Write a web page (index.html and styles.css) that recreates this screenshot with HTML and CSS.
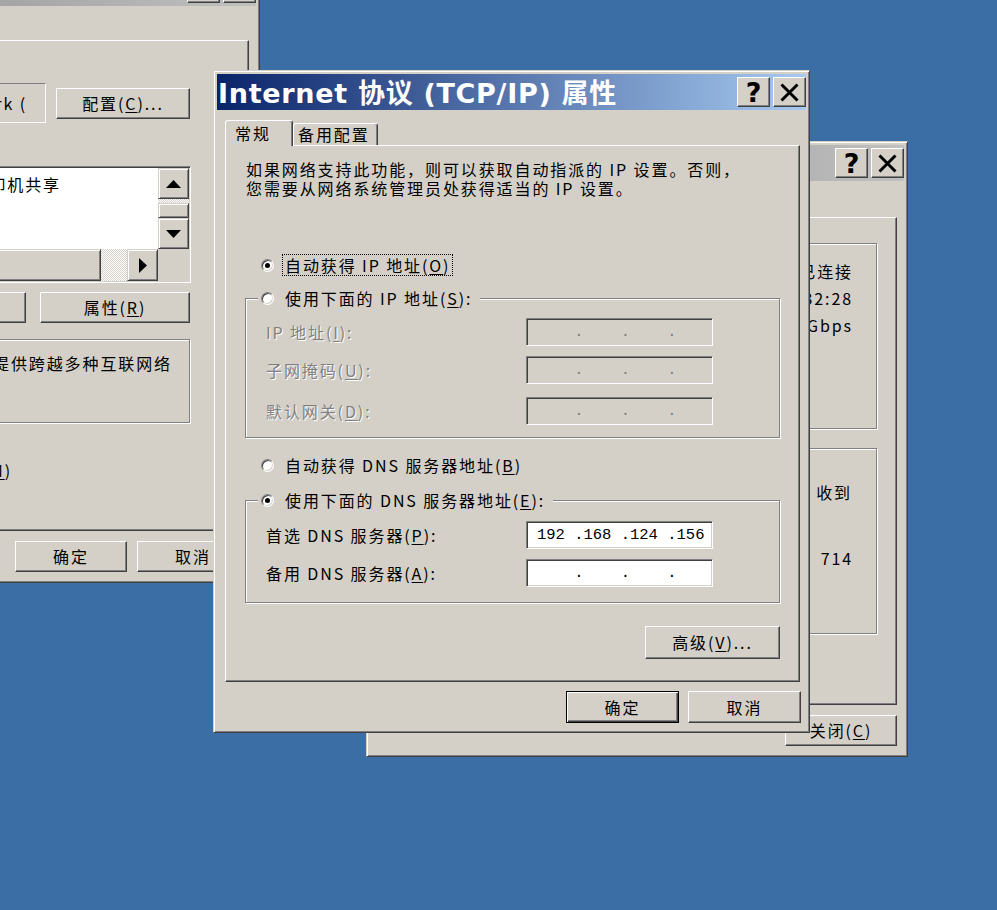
FILE: index.html
```html
<!DOCTYPE html>
<html lang="zh-CN">
<head>
<meta charset="utf-8">
<title>Internet 协议 (TCP/IP) 属性</title>
<link rel="stylesheet" href="styles.css">
</head>
<body>
<div class="desktop">

  <section class="win w1">
    <div class="titlebar inactive">
      <span class="ttext">本地连接 属性</span>
      <span class="tbtns">
        <span class="tbtn help">?</span>
        <span class="tbtn"><svg class="xicon" viewBox="0 0 19 19"><path d="M1.5 1.5L17.5 17.5M17.5 1.5L1.5 17.5"/></svg></span>
      </span>
    </div>
    <div class="page p1">
      <div class="p1-conn">
        <div class="adapter"><span class="nowrap">Intel(R) PRO/1000 MT Network (</span></div>
        <button class="btn b-config">配置(<u>C</u>)...</button>
      </div>
      <div class="listbox">
        <div class="list-area">
          <div class="list-item">Microsoft 网络的文件和打印机共享</div>
        </div>
        <div class="vscroll">
          <span class="sbtn"><svg class="arr-v" viewBox="0 0 15 8"><path d="M0 8H15L7.5 0Z"/></svg></span>
          <span class="track vtrack"></span>
          <span class="sthumb vthumb"></span>
          <span class="sbtn"><svg class="arr-v" viewBox="0 0 15 8"><path d="M0 0H15L7.5 8Z"/></svg></span>
        </div>
        <div class="hscroll">
          <span class="sthumb hthumb"></span>
          <span class="track htrack"></span>
          <span class="sbtn"><svg class="arr-h" viewBox="0 0 8 15"><path d="M0 0L8 7.5L0 15Z"/></svg></span>
        </div>
        <div class="corner"></div>
      </div>
      <div class="p1-btns">
        <button class="btn b-uninst">卸载(<u>U</u>)</button>
        <button class="btn b-prop">属性(<u>R</u>)</button>
      </div>
      <div class="group p1-desc">
        <span class="nowrap">传输控制协议/Internet 协议。该协议是默认的广域网协议，它提供跨越多种互联网络</span>
      </div>
      <div class="p1-check"><span class="nowrap">此连接被限制或无连接时通知我(<u>M</u>)</span></div>
    </div>
    <div class="dlg-btns w1-btns">
      <button class="btn">确定</button>
      <button class="btn">取消</button>
    </div>
  </section>

  <section class="win w3">
    <div class="titlebar inactive">
      <span class="ttext">本地连接 状态</span>
      <span class="tbtns">
        <span class="tbtn help">?</span>
        <span class="tbtn"><svg class="xicon" viewBox="0 0 19 19"><path d="M1.5 1.5L17.5 17.5M17.5 1.5L1.5 17.5"/></svg></span>
      </span>
    </div>
    <div class="page p3">
      <div class="group g3a">
        <div class="srow"><span>状态:</span><span>已连接</span></div>
        <div class="srow"><span>持续时间:</span><span>00:32:28</span></div>
        <div class="srow"><span>速度:</span><span>1.0 Gbps</span></div>
      </div>
      <div class="group g3b">
        <div class="srow act-head"><span>发送</span><span>收到</span></div>
        <div class="srow act-pk"><span>数据包:</span><span>753</span><span>714</span></div>
      </div>
    </div>
    <div class="w3-foot"><button class="btn b-close">关闭(<u>C</u>)</button></div>
  </section>

  <section class="win w2">
    <div class="titlebar active">
      <span class="ttext">Internet 协议 (TCP/IP) 属性</span>
      <span class="tbtns">
        <span class="tbtn help">?</span>
        <span class="tbtn"><svg class="xicon" viewBox="0 0 19 19"><path d="M1.5 1.5L17.5 17.5M17.5 1.5L1.5 17.5"/></svg></span>
      </span>
    </div>
    <div class="tabs">
      <span class="tab sel">常规</span>
      <span class="tab">备用配置</span>
    </div>
    <div class="page p2">
      <p class="desc">如果网络支持此功能，则可以获取自动指派的 IP 设置。否则，<br>您需要从网络系统管理员处获得适当的 IP 设置。</p>
      <div class="radio-row r-auto-ip"><span class="radio on"></span><span class="focus">自动获得 IP 地址(<u>O</u>)</span></div>
      <div class="group g-ip">
        <div class="legend"><span class="radio"></span><span>使用下面的 IP 地址(<u>S</u>):</span></div>
        <div class="frow"><span class="lbl dis">IP 地址(<u>I</u>):</span><span class="ipbox off">    .    .    .</span></div>
        <div class="frow"><span class="lbl dis">子网掩码(<u>U</u>):</span><span class="ipbox off">    .    .    .</span></div>
        <div class="frow fr-gw"><span class="lbl dis">默认网关(<u>D</u>):</span><span class="ipbox off">    .    .    .</span></div>
      </div>
      <div class="radio-row r-auto-dns"><span class="radio"></span><span>自动获得 DNS 服务器地址(<u>B</u>)</span></div>
      <div class="group g-dns">
        <div class="legend"><span class="radio on"></span><span>使用下面的 DNS 服务器地址(<u>E</u>):</span></div>
        <div class="frow fr-dns1"><span class="lbl">首选 DNS 服务器(<u>P</u>):</span><span class="ipbox">192 .168 .124 .156</span></div>
        <div class="frow"><span class="lbl">备用 DNS 服务器(<u>A</u>):</span><span class="ipbox">    .    .    .</span></div>
      </div>
      <button class="btn adv">高级(<u>V</u>)...</button>
    </div>
    <div class="dlg-btns w2-btns">
      <button class="btn default">确定</button>
      <button class="btn">取消</button>
    </div>
  </section>

</div>
</body>
</html>
```

FILE: styles.css
```css
* { box-sizing: border-box; }
html, body { margin: 0; padding: 0; }
body {
  width: 997px; height: 910px; overflow: hidden;
  background: #3a6ea5;
  font-family: "Noto Sans CJK SC", "Noto Sans", sans-serif;
  font-size: 16px; letter-spacing: 1.9px; line-height: 19px; color: #000;
}
.desktop { position: relative; width: 997px; height: 910px; }
.nowrap { white-space: nowrap; }
u { text-decoration: underline; text-underline-offset: 2px; }

/* windows */
.win {
  position: absolute; display: flex; flex-direction: column;
  background: #d4d0c8; padding: 3px;
  border: 1px solid; border-color: #d4d0c8 #404040 #404040 #d4d0c8;
  box-shadow: inset 1px 1px #fff, inset -1px -1px #808080;
}
.w1 { left: -340px; top: -34px; width: 600px; height: 617px; z-index: 1; }
.w3 { left: 366px; top: 141px; width: 542px; height: 616px; z-index: 2; }
.w2 { left: 213px; top: 70px; width: 597px; height: 663px; z-index: 3; }

.titlebar { height: 36px; flex: none; display: flex; align-items: center; padding-left: 1px; overflow: hidden; }
.titlebar.active { background: linear-gradient(to right, #0a246a, #a6caf0); }
.titlebar.inactive { background: linear-gradient(to right, #808080, #c0c0c0); }
.ttext {
  font-family: "DejaVu Sans", "Noto Sans CJK SC", sans-serif; font-weight: bold;
  font-size: 27px; letter-spacing: 0.7px; line-height: 36px; color: #fff; white-space: nowrap;
  padding-top: 3px;
}
.inactive .ttext { color: #d4d0c8; }
.tbtns { margin-left: auto; display: flex; gap: 3px; }
.tbtn {
  width: 33px; height: 30px; display: flex; align-items: center; justify-content: center;
  background: #d4d0c8; border: 1px solid; border-color: #fff #404040 #404040 #fff;
  box-shadow: inset -1px -1px #808080;
}
.help { font-family: "DejaVu Sans", sans-serif; font-weight: bold; font-size: 27px; letter-spacing: 0; line-height: 1; }
.xicon { width: 19px; height: 19px; }
.xicon path { stroke: #000; stroke-width: 3; fill: none; }

/* common controls */
.page {
  flex: none; display: flex; flex-direction: column;
  border: 1px solid; border-color: #fff #404040 #404040 #fff;
  box-shadow: inset -1px -1px #808080;
}
.btn {
  font: inherit; letter-spacing: inherit; line-height: 19px; color: #000; padding: 0;
  background: #d4d0c8; border: 1px solid; border-color: #fff #404040 #404040 #fff;
  box-shadow: inset -1px -1px #808080;
  display: flex; align-items: center; justify-content: center; white-space: nowrap; flex: none;
}
.btn.default {
  border-color: #000;
  box-shadow: inset 1px 1px #fff, inset -1px -1px #404040, inset -2px -2px #808080;
}
.group {
  flex: none; display: flex; flex-direction: column;
  border: 1px solid #808080; box-shadow: inset 1px 1px #fff, 1px 1px #fff;
}
.dlg-btns { display: flex; justify-content: flex-end; flex: none; }

/* radio */
.radio-row { display: flex; align-items: center; height: 20px; margin-left: 15px; align-self: flex-start; flex: none; }
.radio {
  position: relative; flex: none; width: 13px; height: 13px; border-radius: 50%; margin-right: 11px;
  background: #fff; border: 1px solid; border-color: #808080 #fff #fff #808080;
  box-shadow: inset 1px 1px #404040, inset -1px -1px #d4d0c8;
}
.radio.on::after {
  content: ""; position: absolute; left: 3px; top: 3px; width: 5px; height: 5px;
  border-radius: 50%; background: #000;
}
.r-auto-ip .radio { margin-right: 9px; }
.focus { display: inline-block; height: 20px; line-height: 20px; padding: 0 2px; outline: 1px dotted #000; white-space: nowrap; }

/* window 2 */
.tabs { display: flex; align-items: flex-end; height: 25px; margin: 10px 0 0 8px; position: relative; z-index: 1; flex: none; }
.tab {
  height: 22px; line-height: 21px; background: #d4d0c8; white-space: nowrap;
  border: 1px solid; border-bottom: none; border-color: #fff #404040 transparent #fff;
  box-shadow: inset -1px 0 #808080; border-radius: 3px 3px 0 0;
  width: 85px; padding-left: 4px;
}
.tab.sel { height: 26px; line-height: 25px; margin-bottom: -1px; width: 68px; padding-left: 9px; }
.p2 { width: 575px; height: 537px; margin-left: 8px; padding: 14px 19px 0 20px; }
.desc { margin: 0; white-space: nowrap; line-height: 19px; }
.r-auto-ip { margin-top: 57px; }
.g-ip { margin: 23px 0 0 -1px; height: 140px; }
.r-auto-dns { margin-top: 17px; }
.g-dns { margin: 25px 0 0 -1px; height: 103px; }
.legend {
  display: flex; align-items: center; height: 20px; margin: -11px 0 0 12px;
  padding: 0 8px 0 3px; background: #d4d0c8; align-self: flex-start; white-space: nowrap;
}
.frow { display: flex; align-items: center; height: 28px; margin: 10px 0 0 20px; flex: none; }
.fr-gw { margin-top: 13px; }
.fr-dns1 { margin-top: 11px; }
.lbl { width: 260px; white-space: nowrap; }
.dis { color: #808080; text-shadow: 1px 1px 0 #fff; }
.ipbox {
  width: 187px; height: 28px; padding-left: 10px; background: #fff;
  border: 1px solid; border-color: #808080 #fff #fff #808080;
  box-shadow: inset 1px 1px #404040, inset -1px -1px #d4d0c8;
  font-family: "Liberation Mono", monospace; font-size: 15.5px; letter-spacing: 0;
  line-height: 26px; white-space: pre;
}
.ipbox.off { background: #d4d0c8; color: #808080; }
.adv { width: 135px; height: 33px; margin-top: 23px; align-self: flex-end; }
.w2-btns { gap: 9px; margin: 9px 5px 0 0; }
.w2-btns .btn { width: 113px; height: 32px; }

/* window 3 */
.p3 { height: 488px; margin: 36px 7px 0 7px; padding: 25px 19px 0 19px; }
.g3a { height: 186px; padding-top: 14px; }
.g3b { height: 186px; margin-top: 19px; }
.srow { display: flex; justify-content: space-between; align-items: center; height: 27px; padding: 0 23px 0 20px; white-space: nowrap; flex: none; }
.act-head { height: 20px; margin-top: 33px; padding-right: 24px; }
.act-pk { height: 20px; margin-top: 46px; padding-right: 23px; }
.w3-foot { display: flex; justify-content: flex-end; margin: 10px 7px 0 0; }
.b-close { width: 112px; height: 31px; }

/* window 1 */
.p1 { height: 491px; margin: 34px 7px 0 7px; align-items: flex-end; }
.p1-conn { display: flex; align-items: center; gap: 10px; margin: 42px 58px 0 0; flex: none; }
.adapter {
  width: 360px; height: 40px; display: flex; align-items: center; justify-content: flex-end;
  padding-right: 18px; overflow: hidden;
  border: 1px solid; border-color: #808080 #fff #fff #808080;
}
.b-config { width: 134px; height: 31px; }
.listbox {
  flex: none; width: 400px; height: 117px; margin: 43px 57px 0 0; padding: 1px;
  display: grid; grid-template-columns: 1fr 31px; grid-template-rows: 81px 32px;
  background: #d4d0c8; border: 1px solid; border-color: #808080 #fff #fff #808080;
  box-shadow: inset 1px 1px #404040, inset -1px -1px #d4d0c8;
}
.list-area { background: #fff; overflow: hidden; }
.list-item { height: 32px; display: flex; align-items: center; justify-content: flex-end; padding-right: 97px; white-space: nowrap; }
.vscroll { display: flex; flex-direction: column; }
.hscroll { display: flex; }
.corner { background: #d4d0c8; }
.sbtn, .sthumb {
  background: #d4d0c8; border: 1px solid; border-color: #d4d0c8 #404040 #404040 #d4d0c8;
  box-shadow: inset 1px 1px #fff, inset -1px -1px #808080;
}
.sbtn { width: 31px; height: 31px; flex: none; display: flex; align-items: center; justify-content: center; }
.hscroll .sbtn { height: 32px; }
.arr-v { width: 15px; height: 8px; }
.arr-h { width: 8px; height: 15px; }
.track { background: repeating-conic-gradient(#fff 0 25%, #d4d0c8 0 50%) 0 0 / 2px 2px; flex: none; }
.vtrack { height: 4px; }
.vthumb { height: 15px; flex: none; }
.htrack { width: 26px; }
.hthumb { flex: 1; }
.p1-btns { display: flex; gap: 14px; margin: 9px 58px 0 0; flex: none; }
.b-uninst { width: 112px; height: 31px; }
.b-prop { width: 150px; height: 31px; }
.p1-desc { width: 400px; height: 84px; margin: 16px 58px 0 0; flex-direction: row; justify-content: flex-end; align-items: flex-start; padding: 14px 17px 0 0; overflow: hidden; }
.p1-check { margin: 38px 236px 0 0; display: flex; justify-content: flex-end; flex: none; }
.w1-btns { gap: 10px; margin: 10px 7px 0 0; }
.w1-btns .btn { width: 112px; height: 31px; }
```
